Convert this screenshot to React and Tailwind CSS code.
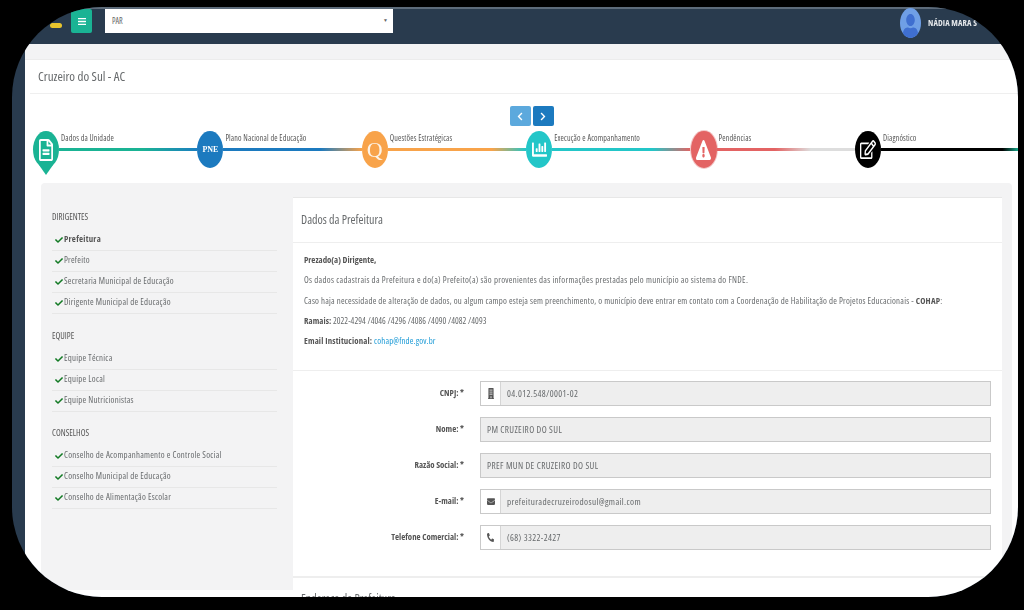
import React from "react";
import { FaBars, FaBuilding, FaChartBar, FaCheck, FaChevronLeft, FaChevronRight, FaEnvelope, FaExclamationTriangle, FaPhone, FaRegEdit, FaRegFileAlt, FaUser } from "react-icons/fa";

const steps = [
  { label: "Dados da Unidade", line: "bg-[linear-gradient(to_right,#1ab394_0%,#1ab394_60%,#1c7fc0_100%)]" },
  { label: "Plano Nacional de Educação", line: "bg-[linear-gradient(to_right,#1c7abf_0%,#1c7abf_70%,#f8a34a_100%)]" },
  { label: "Questões Estratégicas", line: "bg-[linear-gradient(to_right,#f8a34a_0%,#f8a34a_75%,#23c6c8_100%)]" },
  { label: "Execução e Acompanhamento", line: "bg-[linear-gradient(to_right,#23c6c8_0%,#23c6c8_72%,#e36363_100%)]" },
  { label: "Pendências", line: "bg-[linear-gradient(to_right,#e36363_0%,#e36363_42%,#dddddd_68%,#dddddd_100%)]" },
  { label: "Diagnóstico", line: "bg-[linear-gradient(to_right,#000000_0%,#000000_88%,#1ab394_100%)]" },
];

const stepIcons = [
  <div className="w-[26px] h-[44px] shrink-0 flex flex-col items-center">
    <div className="w-[26px] h-[37px] rounded-[50%] bg-[#1ab394] flex items-center justify-center text-white">
      <FaRegFileAlt className="w-[14px] h-[22px]" preserveAspectRatio="none" />
    </div>
    <div className="w-0 h-0 -mt-[3px] border-x-[7px] border-x-transparent border-t-[10px] border-t-[#1ab394]" />
  </div>,
  <div className="w-[26px] h-[37px] shrink-0 rounded-[50%] bg-[#1c7abf] flex items-center justify-center text-white text-[8px] font-bold font-['Liberation_Serif',serif]">PNE</div>,
  <div className="w-[26px] h-[37px] shrink-0 rounded-[50%] bg-[#f8a34a] flex items-center justify-center text-[#fdf3e6] text-[22px] leading-none font-['Liberation_Serif',serif]">Q</div>,
  <div className="w-[26px] h-[37px] shrink-0 rounded-[50%] bg-[#23c6c8] flex items-center justify-center text-white">
    <FaChartBar className="w-[15px] h-[19px]" preserveAspectRatio="none" />
  </div>,
  <div className="w-[26px] h-[37px] shrink-0 rounded-[50%] bg-[#e36363] flex items-center justify-center text-white ring-1 ring-[#f3c9c9]">
    <FaExclamationTriangle className="w-[15px] h-[20px]" preserveAspectRatio="none" />
  </div>,
  <div className="w-[26px] h-[37px] shrink-0 rounded-[50%] bg-black flex items-center justify-center text-white">
    <FaRegEdit className="w-[16px] h-[19px]" preserveAspectRatio="none" />
  </div>,
];

const menu = [
  { title: "DIRIGENTES", pt: "pt-[14px]", items: ["Prefeitura", "Prefeito", "Secretaria Municipal de Educação", "Dirigente Municipal de Educação"] },
  { title: "EQUIPE", pt: "pt-[16px]", items: ["Equipe Técnica", "Equipe Local", "Equipe Nutricionistas"] },
  { title: "CONSELHOS", pt: "pt-[15px]", items: ["Conselho de Acompanhamento e Controle Social", "Conselho Municipal de Educação", "Conselho de Alimentação Escolar"] },
];

const fields = [
  { label: "CNPJ:", value: "04.012.548/0001-02", icon: <FaBuilding className="w-[6px] h-[11px]" preserveAspectRatio="none" /> },
  { label: "Nome:", value: "PM CRUZEIRO DO SUL" },
  { label: "Razão Social:", value: "PREF MUN DE CRUZEIRO DO SUL" },
  { label: "E-mail:", value: "prefeituradecruzeirodosul@gmail.com", icon: <FaEnvelope className="w-[8px] h-[9px]" preserveAspectRatio="none" /> },
  { label: "Telefone Comercial:", value: "(68) 3322-2427", icon: <FaPhone className="w-[7px] h-[9px] -scale-x-100" preserveAspectRatio="none" /> },
];

const App = () => {
  return (
    <div className="w-[1024px] h-[610px] bg-black pt-[7px] pl-[12px] overflow-hidden font-['Open_Sans',sans-serif] font-stretch-[75%]">
      <div className="w-[1006px] h-[590px] rounded-[90px] overflow-hidden bg-[#293b4e] flex flex-col blur-[0.45px]">
        <header className="h-[37px] shrink-0 flex items-start border-t-2 border-[#5d6b7a]">
          <div className="w-[38px] h-[5px] mt-[14px] ml-[20px] shrink-0">
            <div className="w-[12px] h-[5px] ml-[18px] rounded-full bg-[#e8c52e]" />
          </div>
          <button className="w-[21px] h-[24px] ml-[1px] shrink-0 rounded-[2px] bg-[#1ab394] text-white flex items-center justify-center">
            <FaBars className="w-[8px] h-[9px]" preserveAspectRatio="none" />
          </button>
          <div className="w-[288px] h-[24px] ml-[13px] shrink-0 bg-white flex items-center justify-between pl-[7px] pr-[5px] text-[8px] text-[#666]">
            <span>PAR</span>
            <span className="text-[5px]">▼</span>
          </div>
          <div className="ml-[507px] w-[21px] h-[30px] -mt-[1px] shrink-0 rounded-[50%] bg-[#6f9fe6] flex items-end justify-center overflow-hidden text-[#3f6fd0]">
            <FaUser className="w-[15px] h-[24px]" preserveAspectRatio="none" />
          </div>
          <span className="ml-[7px] mt-[8px] text-[8.5px] tracking-[0.1px] font-bold text-[#e6e9ec] whitespace-nowrap">NÁDIA MARA S</span>
        </header>

        <div className="flex-1 ml-[13px] bg-white flex flex-col min-h-0">
          <div className="h-[16px] shrink-0 bg-[#f3f3f4] border-b border-[#ececec]" />
          <div className="h-[34px] shrink-0 ml-[5px] flex items-center pl-[8px] border-b border-[#efefef] text-[13px] text-[#676a6c]">
            Cruzeiro do Sul - AC
          </div>

          <div className="flex justify-center gap-[2px] pt-[12px] pl-[20px] shrink-0">
            <button className="w-[21px] h-[20px] rounded-[2px] bg-[#5ca9dd] text-white flex items-center justify-center">
              <FaChevronLeft className="w-[6px] h-[9px]" />
            </button>
            <button className="w-[21px] h-[20px] rounded-[2px] bg-[#1c7abf] text-white flex items-center justify-center">
              <FaChevronRight className="w-[6px] h-[9px]" />
            </button>
          </div>

          <div className="flex pl-[8px] pt-[5px] h-[57px] shrink-0">
            {steps.map((step, i) => (
              <div key={step.label} className="w-[164.4px] flex items-start shrink-0">
                {stepIcons[i]}
                <div className="flex-1 flex flex-col">
                  <span className="h-[13px] pl-[2px] text-[8px] tracking-[0.15px] leading-[13px] text-[#555] whitespace-nowrap">{step.label}</span>
                  <div className={`h-[3px] mt-[4px] ${step.line}`} />
                </div>
              </div>
            ))}
          </div>

          <div className="flex-1 min-h-0 ml-[16px] flex flex-col">
            <div className="h-[14px] shrink-0 mr-[6px] bg-[#f3f3f4] rounded-t-[4px]" />
            <div className="flex-1 min-h-0 flex">
              <aside className="w-[252px] shrink-0 pl-[11px] pr-[16px] mb-[7px] bg-[#f3f3f4]">
                {menu.map((group) => (
                  <div key={group.title}>
                    <h3 className={`${group.pt} pb-[7px] text-[8.8px] leading-[12px] text-[#555]`}>{group.title}</h3>
                    {group.items.map((item) => (
                      <div key={item} className="h-[21px] flex items-center pl-[3px] gap-[1px] border-b border-[#e7e7e7] text-[8.8px] tracking-[0.25px] text-[#676a6c]">
                        <FaCheck className="w-[8px] h-[8px] text-[#137a24] shrink-0" />
                        <span className={item === "Prefeitura" ? "font-bold text-[#555]" : ""}>{item}</span>
                      </div>
                    ))}
                  </div>
                ))}
              </aside>

              <main className="w-[709px] shrink-0 bg-white flex flex-col min-h-0 border-t border-[#e7e7e7]">
                <div className="h-[45px] shrink-0 flex items-center pl-[8px] border-b border-[#eeeeee] text-[12px] text-[#676a6c]">
                  Dados da Prefeitura
                </div>
                <div className="h-[128px] shrink-0 pl-[11px] pt-[7px] border-b border-[#eeeeee] text-[8.8px] leading-[20.3px] text-[#676a6c]">
                  <p className="font-bold text-[#555]">Prezado(a) Dirigente,</p>
                  <p className="tracking-[0.3px]">Os dados cadastrais da Prefeitura e do(a) Prefeito(a) são provenientes das informações prestadas pelo município ao sistema do FNDE.</p>
                  <p className="tracking-[0.22px]">Caso haja necessidade de alteração de dados, ou algum campo esteja sem preenchimento, o município deve entrar em contato com a Coordenação de Habilitação de Projetos Educacionais - <b className="text-[#555]">COHAP</b>:</p>
                  <p className="tracking-[0.05px]"><b className="text-[#555]">Ramais:</b> 2022-4294 /4046 /4296 /4086 /4090 /4082 /4093</p>
                  <p className="tracking-[0.15px]"><b className="text-[#555]">Email Institucional:</b> <a className="text-[#1c9ad6]">cohap@fnde.gov.br</a></p>
                </div>
                <form className="h-[207px] shrink-0 pt-[10px] flex flex-col gap-[11px] border-b-2 border-[#eeeeee]">
                  {fields.map((field) => (
                    <div key={field.label} className="flex items-center h-[25px] shrink-0">
                      <label className="w-[171px] text-right text-[8.8px] font-bold text-[#555] shrink-0">{field.label} *</label>
                      <div className="ml-[16px] w-[511px] h-[25px] flex border border-[#c9c9c9] bg-[#eeeeee] text-[9.2px] tracking-[0.37px] text-[#676a6c]">
                        {field.icon && (
                          <span className="w-[20px] shrink-0 bg-white border-r border-[#d5d5d5] flex items-center justify-center text-[#555]">{field.icon}</span>
                        )}
                        <span className="flex items-center pl-[6px]">{field.value}</span>
                      </div>
                    </div>
                  ))}
                </form>
                <div className="pl-[8px] pt-[12px] text-[12px] text-[#676a6c]">Endereço da Prefeitura</div>
              </main>
              <div className="w-[10px] shrink-0 mb-[7px] bg-[#f3f3f4]" />
            </div>
          </div>
        </div>
      </div>
    </div>
  );
};

export default App;
